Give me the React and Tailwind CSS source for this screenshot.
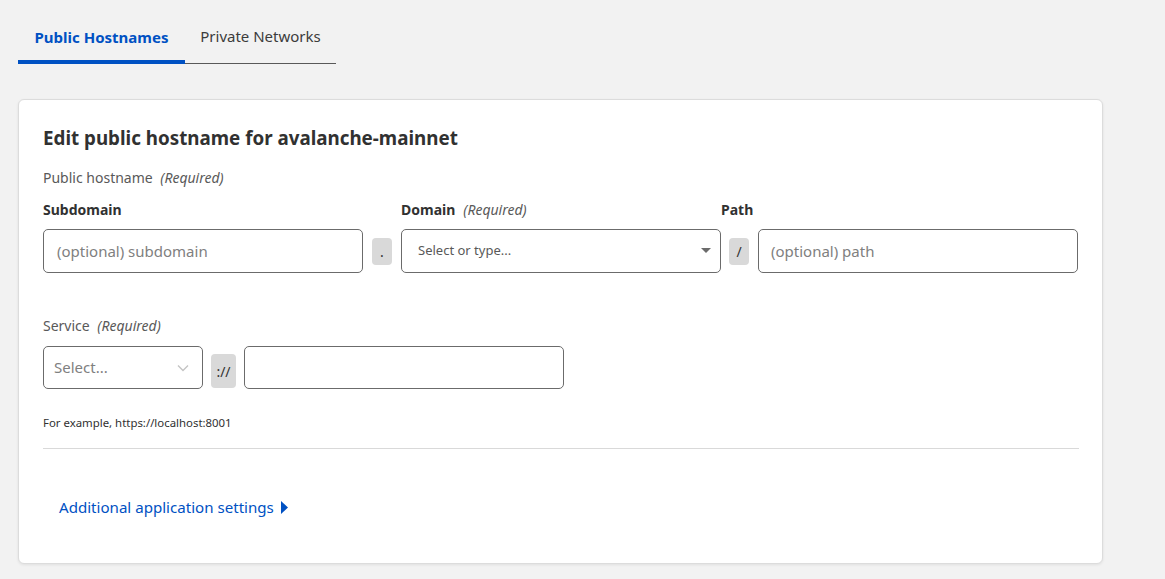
import React from "react";

const font = { fontFamily: '"Noto Sans", "Open Sans", sans-serif' };

function Chip({ children, className = "" }) {
  return (
    <div
      className={`flex items-center justify-center rounded-[4px] bg-[#d9d9d9] text-[14px] text-[#313131] ${className}`}
    >
      {children}
    </div>
  );
}

export default function App() {
  return (
    <div
      className="min-h-[579px] w-full bg-[#f2f2f2] px-[18px] pt-[14px] pb-[15px]"
      style={font}
    >
      {/* Tabs */}
      <div className="flex items-end">
        <div className="flex h-[50px] w-[167px] items-center justify-center border-b-[4px] border-[#0051c3] text-[15px] font-bold text-[#0051c3]">
          Public Hostnames
        </div>
        <div className="flex h-[48px] w-[151px] items-center justify-center border-b border-[#595959] pb-[6px] text-[15px] text-[#3c3c3c]">
          Private Networks
        </div>
      </div>

      {/* Card */}
      <div className="mt-[35px] h-[465px] w-[1085px] rounded-[6px] border border-[#dcdcdc] bg-white pl-[24px] pt-[26px] shadow-[0_1px_3px_rgba(0,0,0,0.08)]">
        <h2 className="text-[18.8px] leading-[24px] font-bold text-[#313131]">
          Edit public hostname for avalanche-mainnet
        </h2>

        <div className="mt-[18px] text-[14px] leading-[20px] text-[#595959]">
          Public hostname{" "}
          <span className="ml-[4px] italic">(Required)</span>
        </div>

        {/* labels row */}
        <div className="mt-[12px] flex text-[14px] leading-[20px] text-[#313131]">
          <div className="w-[358px] font-bold">Subdomain</div>
          <div className="w-[320px]">
            <span className="font-bold">Domain</span>
            <span className="ml-[8px] italic text-[#595959]">(Required)</span>
          </div>
          <div className="font-bold">Path</div>
        </div>

        {/* inputs row */}
        <div className="mt-[9px] flex items-center">
          <div className="flex h-[44px] w-[320px] items-center rounded-[5px] border border-[#6b6b6b] px-[13px] text-[15px] text-[#808080]">
            (optional) subdomain
          </div>
          <Chip className="mx-[9px] h-[27px] w-[20px]">.</Chip>
          <div className="flex h-[44px] w-[320px] items-center justify-between rounded-[5px] border border-[#6b6b6b] pl-[16px] pr-[9px] text-[13px] text-[#595959]">
            <span>Select or type...</span>
            <svg width="10" height="6" viewBox="0 0 10 6">
              <path d="M0 0 L10 0 L5 5 Z" fill="#6b6b6b" />
            </svg>
          </div>
          <Chip className="ml-[8px] mr-[9px] h-[27px] w-[20px]">/</Chip>
          <div className="flex h-[44px] w-[320px] items-center rounded-[5px] border border-[#6b6b6b] px-[12px] text-[15px] text-[#808080]">
            (optional) path
          </div>
        </div>

        <div className="mt-[43px] text-[14px] leading-[20px] text-[#595959]">
          Service <span className="ml-[4px] italic">(Required)</span>
        </div>

        <div className="mt-[10px] flex items-end">
          <div className="flex h-[43px] w-[160px] items-center justify-between rounded-[5px] border border-[#6b6b6b] pl-[10px] pr-[13px] text-[15px] text-[#808080]">
            <span>Select...</span>
            <svg width="12" height="8" viewBox="0 0 12 8" fill="none">
              <path
                d="M1 1.5 L6 6.5 L11 1.5"
                stroke="#c4c4c4"
                strokeWidth="1.4"
              />
            </svg>
          </div>
          <Chip className="mx-[8px] mb-[1px] h-[34px] w-[25px]">://</Chip>
          <div className="h-[43px] w-[320px] rounded-[5px] border border-[#6b6b6b]" />
        </div>

        <div className="mt-[26px] text-[11.4px] leading-[16px] text-[#313131]">
          For example, https://localhost:8001
        </div>

        <div className="mt-[17px] h-px w-[1036px] bg-[#d9d9d9]" />

        <div className="ml-[16px] mt-[46px] flex items-center text-[15.1px] leading-[24px] text-[#0051c3]">
          <span>Additional application settings</span>
          <svg className="ml-[7px]" width="7" height="13" viewBox="0 0 7 13">
            <path d="M0 0 L7 6.5 L0 13 Z" fill="#0051c3" />
          </svg>
        </div>
      </div>
    </div>
  );
}
